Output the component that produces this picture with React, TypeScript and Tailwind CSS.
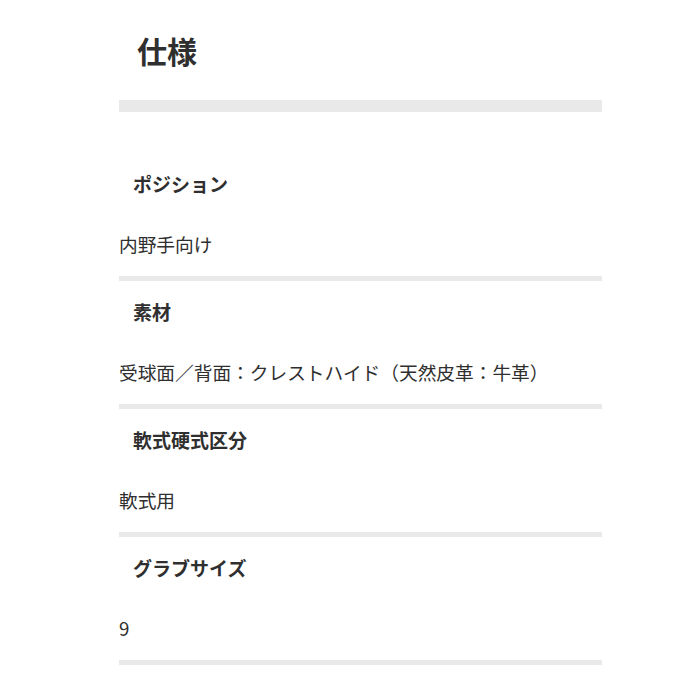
import React from 'react'

const specs = [
  { label: 'ポジション', value: '内野手向け' },
  { label: '素材', value: '受球面／背面：クレストハイド（天然皮革：牛革）' },
  { label: '軟式硬式区分', value: '軟式用' },
  { label: 'グラブサイズ', value: '9' },
]

export default function App() {
  return (
    <div
      className="min-h-screen bg-white text-[#2f2f2f]"
      style={{ fontFamily: '"Noto Sans CJK JP", "Noto Sans", sans-serif' }}
    >
      <div className="ml-[119px] w-[483px]">
        {/* Title */}
        <div className="h-[100px] flex items-center pl-[18px]">
          <h1 className="text-[30px] font-bold leading-none">仕様</h1>
        </div>
        <div className="h-[12px] bg-[#e9e9e9]" />
        <div className="h-[41px]" />

        {specs.map((s) => (
          <div key={s.label}>
            <div className="h-[60px] flex items-center pl-[14px]">
              <h2 className="text-[19px] font-bold leading-none">{s.label}</h2>
            </div>
            <div className="h-[63px] flex items-center">
              <p className="text-[18.7px] leading-none">{s.value}</p>
            </div>
            <div className="h-[5px] bg-[#e9e9e9]" />
          </div>
        ))}
      </div>
    </div>
  )
}
